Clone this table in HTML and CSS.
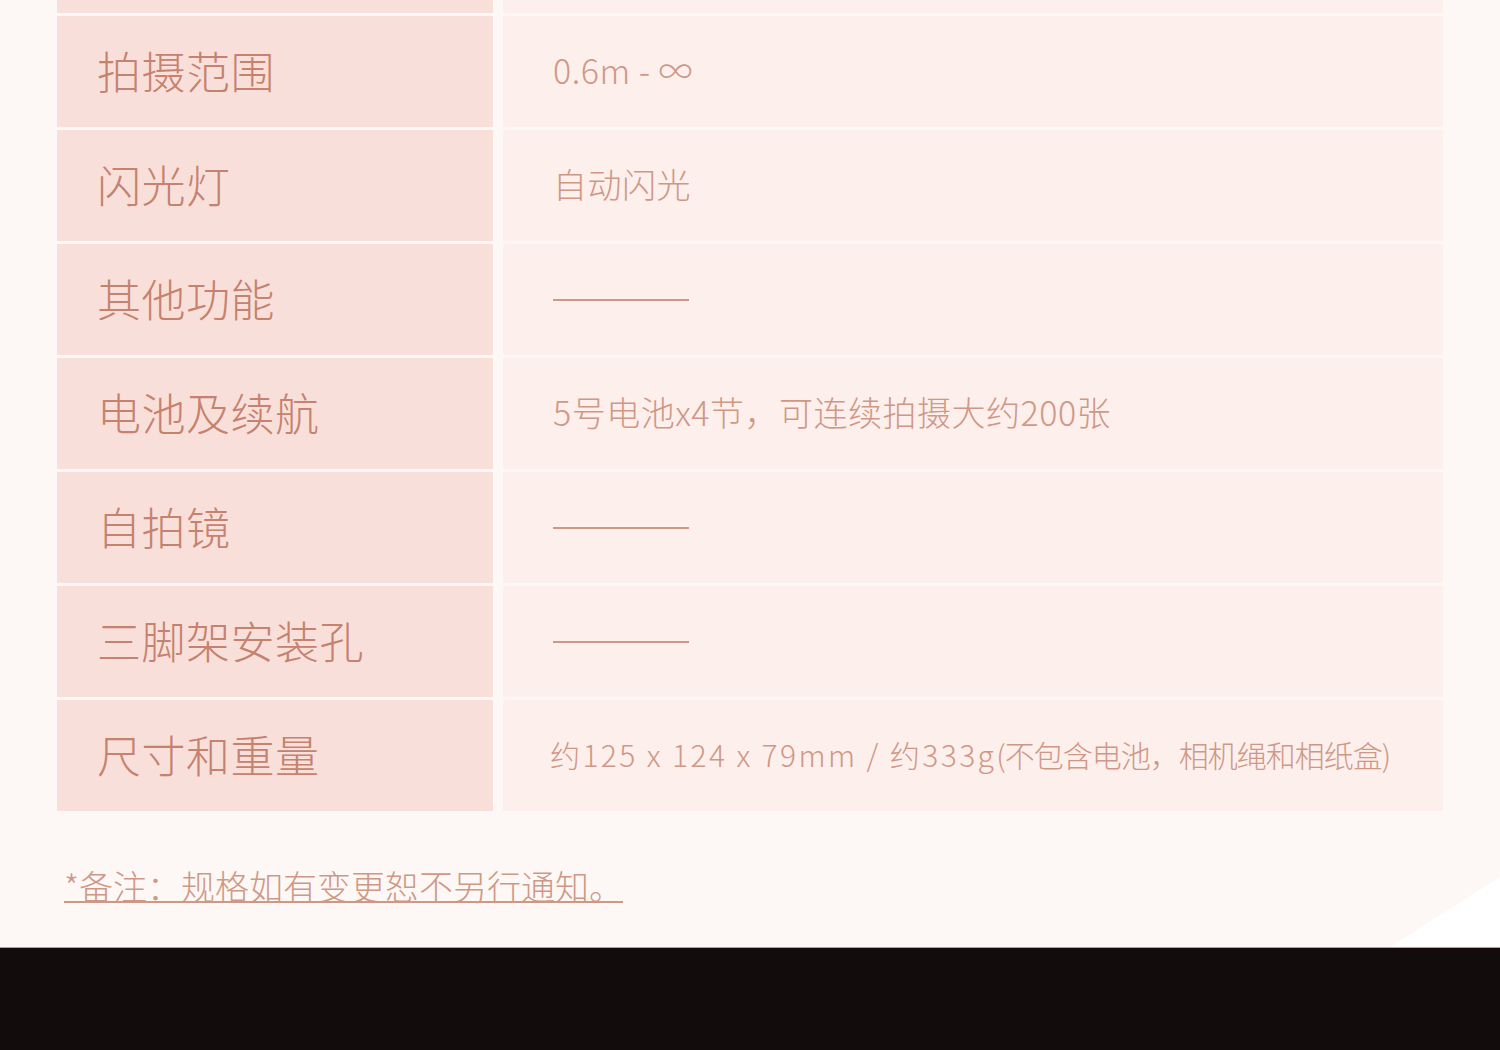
FILE: index.html
```html
<!DOCTYPE html>
<html lang="zh-CN">
<head>
<meta charset="UTF-8" />
<meta name="viewport" content="width=device-width, initial-scale=1" />
<title>产品规格</title>
<link rel="stylesheet" href="styles.css">
</head>
<body>
<div class="page">
  <div class="specs">
    <div class="row row-cut">
      <div class="label"></div>
      <div class="value"></div>
    </div>
    <div class="row">
      <div class="label">拍摄范围</div>
      <div class="value">0.6m - ∞</div>
    </div>
    <div class="row">
      <div class="label">闪光灯</div>
      <div class="value">自动闪光</div>
    </div>
    <div class="row">
      <div class="label">其他功能</div>
      <div class="value"><span class="dash"></span></div>
    </div>
    <div class="row">
      <div class="label">电池及续航</div>
      <div class="value">5号电池x4节，可连续拍摄大约200张</div>
    </div>
    <div class="row">
      <div class="label">自拍镜</div>
      <div class="value"><span class="dash"></span></div>
    </div>
    <div class="row">
      <div class="label">三脚架安装孔</div>
      <div class="value"><span class="dash"></span></div>
    </div>
    <div class="row">
      <div class="label">尺寸和重量</div>
      <div class="value small">约125 x 124 x 79mm / 约333g<span class="paren">(不包含电池，相机绳和相纸盒)</span></div>
    </div>
  </div>
  <p class="note">*备注：规格如有变更恕不另行通知。</p>
  <div class="corner"></div>
</div>
<footer class="footer"></footer>
</body>
</html>
```

FILE: styles.css
```css
:root {
  --page-bg: #fdf8f6;
  --label-bg: #f9dfda;
  --value-bg: #fdefec;
  --text: #c4826f;
  --text-light: #cf9886;
  --font: "Noto Sans CJK SC", "Noto Sans", sans-serif;
}
* {
  box-sizing: border-box;
}
body {
  margin: 0;
  background: var(--page-bg);
  font-family: var(--font);
}
.page {
  position: relative;
  height: 947px;
  overflow: hidden;
  padding: 0 57px;
}
.specs {
  display: flex;
  flex-direction: column;
  gap: 3px;
}
.row {
  display: grid;
  grid-template-columns: 436px 940px;
  column-gap: 10px;
  height: 111px;
}
.row-cut {
  height: 13px;
}
.label {
  background: var(--label-bg);
  color: var(--text);
  font-size: 44px;
  font-weight: 300;
  letter-spacing: 0.5px;
  display: flex;
  align-items: center;
  padding: 0 0 4px 40px;
}
.value {
  background: var(--value-bg);
  color: var(--text-light);
  font-size: 34px;
  font-weight: 300;
  letter-spacing: 0.5px;
  display: flex;
  align-items: center;
  padding: 0 0 4px 50px;
}
.value.small {
  font-size: 30px;
  letter-spacing: 2.4px;
  padding-left: 47px;
}
.paren {
  letter-spacing: -1px;
}
.dash {
  display: block;
  width: 136px;
  margin-top: 4px;
  border-top: 2px solid var(--text-light);
}
.note {
  margin: 50px 0 0 7px;
  font-size: 34px;
  font-weight: 300;
  letter-spacing: 0;
  color: var(--text-light);
  text-decoration: underline;
  text-decoration-thickness: 2px;
  text-underline-offset: 1px;
}
.corner {
  position: absolute;
  right: 0;
  bottom: 0;
  width: 110px;
  height: 70px;
  background: #ffffff;
  clip-path: polygon(100% 0, 100% 100%, 0 100%);
}
.footer {
  height: 103px;
  background: #120c0d;
  border-top: 1px solid #a8a4a2;
}
```
